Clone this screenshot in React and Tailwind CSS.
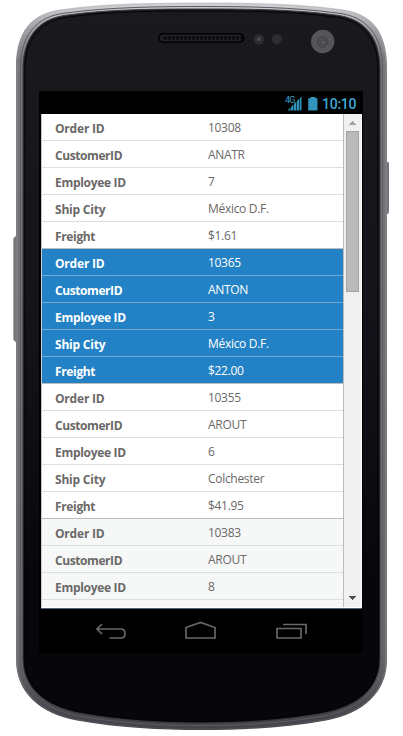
const groups = [
  { rows: ["10308", "ANATR", "7", "México D.F.", "$1.61"], kind: "plain" },
  { rows: ["10365", "ANTON", "3", "México D.F.", "$22.00"], kind: "selected" },
  { rows: ["10355", "AROUT", "6", "Colchester", "$41.95"], kind: "plain" },
  { rows: ["10383", "AROUT", "8", ""], kind: "alt" },
];
const labels = [
  { text: "Order ID", cls: "tracking-[-0.2px]" },
  { text: "CustomerID", cls: "tracking-[-0.42px]" },
  { text: "Employee ID", cls: "tracking-[-0.3px]" },
  { text: "Ship City", cls: "tracking-[-0.2px]" },
  { text: "Freight", cls: "tracking-[-0.35px]" },
];
const styles = {
  plain: "bg-white text-[#6b6868] border-[#dedede]",
  selected: "bg-[#2382c5] text-white border-[#75a8cd]",
  alt: "bg-[#f5f8f7] text-[#6b6868] border-[#dcdedf]",
};

function PhoneBody() {
  const grille = Array.from({ length: 20 }, (_, i) => 164.5 + i * 4);
  return (
    <svg className="absolute inset-0" width="403" height="736" viewBox="0 0 403 736" fill="none">
      <defs>
        <linearGradient id="rim" x1="0" y1="0" x2="0" y2="1">
          <stop offset="0" stopColor="#d4d4d8" />
          <stop offset=".035" stopColor="#a2a2a6" />
          <stop offset=".08" stopColor="#77777b" />
          <stop offset=".9" stopColor="#68686d" />
          <stop offset=".96" stopColor="#4b4a50" />
          <stop offset="1" stopColor="#454349" />
        </linearGradient>
        <linearGradient id="edge" x1="0" y1="0" x2="0" y2="1">
          <stop offset="0" stopColor="#aaa9ae" />
          <stop offset=".9" stopColor="#aaa9ae" />
          <stop offset="1" stopColor="#605f65" />
        </linearGradient>
        <linearGradient id="glass" x1="0" y1="0" x2="0" y2="1">
          <stop offset="0" stopColor="#1a191e" />
          <stop offset=".45" stopColor="#141319" />
          <stop offset=".8" stopColor="#07060b" />
          <stop offset="1" stopColor="#07060b" />
        </linearGradient>
      </defs>
      <path d="M16 236q-3 1-3 7v92q0 6 3 7z" fill="#77777b" />
      <path d="M13.5 238v102" stroke="#aaaaae" />
      <path d="M386 162h2q1 0 1 2v47q0 2-1 3h-2z" fill="#77747b" />
      <path d="M16 67C16 32 31 12 64 9C105 3 155 2.500 201.500 2.500S298 3 339 9C372 12 387 32 387 67V660C387 692 363 714 326 720.500C284 728 242 730 201.500 730S119 728 77 720.500C40 714 16 692 16 660Z" fill="url(#rim)" />
      <path d="M17 67C17 33 32 13 64 10C105 4 155 3.500 201.500 3.500S298 4 339 10C371 13 386 33 386 67V660C386 691 362 713 326 719.500C284 727 242 729 201.500 729S119 727 77 719.500C41 713 17 691 17 660Z" stroke="url(#edge)" strokeOpacity=".4" />
      <path d="M20.500 68C20.500 36 36 16 66 13C110 7 160 6.500 201.500 6.500S293 7 337 13C367 16 382.500 36 382.500 68V660C382.500 689 360 709.500 324 716C282 723.500 242 725.500 201.500 725.500S121 723.500 79 716C43 709.500 20.500 689 20.500 660Z" stroke="#5b5a61" strokeWidth="1" />
      <path d="M23 69C23 38 38 18 68 15C110 9 160 9 201.500 9S293 9 335 15C365 18 380 38 380 69V659C380 688 358 707 322 713.500C282 720.500 242 723 201.500 723S121 720.500 81 713.500C45 707 23 688 23 659Z" fill="url(#glass)" stroke="#3c3a41" />
      <path d="M25 69C25 40 40 20 69 17C111 11 160 11 201.500 11S292 11 334 17C363 20 378 40 378 69V659C378 686 357 705 321 711.500C281 718.500 242 721 201.500 721S122 718.500 82 711.500C46 705 25 686 25 659Z" stroke="#050508" strokeWidth="1" />
      <rect x="158" y="33" width="86.500" height="10" rx="5" fill="#020203" />
      <rect x="160" y="35" width="82" height="6" rx="3" fill="#1d1c21" stroke="#2c2b30" strokeWidth=".6" />
      {grille.map((x) => (
        <rect key={x} x={x} y="36.500" width="2" height="3" fill="#050507" />
      ))}
      <circle cx="259" cy="39.300" r="5.300" fill="#2b2b30" />
      <circle cx="259" cy="39.300" r="2" fill="#4c4c52" />
      <circle cx="277" cy="39.300" r="5.300" fill="#2b2b30" />
      <circle cx="277" cy="39.300" r="2.500" stroke="#36363c" />
      <circle cx="322.700" cy="41.500" r="11.700" fill="#555458" />
      <circle cx="322.700" cy="42" r="5.200" fill="#504f54" stroke="#3e3d42" strokeWidth="1" />
      <circle cx="323" cy="42.500" r="2.500" fill="#5a595e" stroke="#3e3d42" strokeWidth=".8" />
    </svg>
  );
}

function StatusBar() {
  return (
    <div className="relative h-[23px] shrink-0">
      <svg className="absolute left-[244px] top-0" width="36" height="23" viewBox="0 0 36 23">
        <g fill="#3094bd">
          <path d="M4.500 19.500l3-3v3zM8 16l2.400-2.400v5.900H8zM11 13l2.400-2.400v8.900H11zM14 10l2.200-2.200v11.700H14zM16.800 7.200l1.700-1.700v14h-1.700z" />
          <path d="M27.500 6h5v1.200h2V19.500h-9.300V7.200h2.300z" />
        </g>
      </svg>
      <span className="absolute left-[246px] top-[5px] text-[9px] leading-[8px] tracking-[-0.8px] text-[#3a9fc9] font-[Roboto,sans-serif]">4G</span>
      <span className="absolute left-[283px] top-[5px] text-[14px] leading-[16px] tracking-[-0.25px] text-[#3ba9d8] font-medium font-[Roboto,sans-serif]">10:10</span>
    </div>
  );
}

function Scrollbar() {
  return (
    <div className="flex w-[18px] shrink-0 flex-col items-center bg-[#f0f0f0] border-r border-white">
      <svg width="17" height="17" viewBox="0 0 17 17" shapeRendering="crispEdges">
        <path d="M4.500 11h8l-4-4.500z" fill="#a0a0a0" />
      </svg>
      <div className="h-[161px] w-[13px] border border-[#a4a4a4] bg-[#bababa]" />
      <svg className="mt-auto" width="17" height="17" viewBox="0 0 17 17" shapeRendering="crispEdges">
        <path d="M4.500 6h8l-4 4.500z" fill="#4d4d4d" />
      </svg>
    </div>
  );
}

function Grid() {
  return (
    <div className="flex h-[494px] shrink-0 overflow-hidden border-l border-b border-l-[#c9c9c9] border-b-white ml-[2px] mr-px">
      <div className="min-w-0 flex-1 border-r border-[#bcbcbc]">
        {groups.map((g, gi) => (
          <div key={gi} className={g.kind === "alt" ? "h-[88px] overflow-hidden bg-[#f5f8f7]" : ""}>
            {g.rows.map((value, i) => (
              <div
                key={i}
                className={`flex h-[27px] border-b pl-[13px] text-[12px] leading-[16px] font-['Open_Sans','Noto_Sans',sans-serif] ${styles[g.kind]} ${i === 4 ? "border-b-[#bcbcbc]" : ""}`}
              >
                <div className={`w-[153px] shrink-0 pt-[7px] font-bold ${labels[i].cls}`}>{gi === 3 && i === 3 ? "" : labels[i].text}</div>
                <div className="pt-[6px] tracking-[-0.3px]">{value}</div>
              </div>
            ))}
          </div>
        ))}
      </div>
      <Scrollbar />
    </div>
  );
}

function NavBar() {
  return (
    <svg className="h-[44px] w-full shrink-0" viewBox="39 609 324 44" fill="none" stroke="#68686b" strokeWidth="1.700">
      <path d="M102 624l-5 5 5 5M97.500 629H121q4 0 4 4.500t-4 4.500H109.500" />
      <path d="M186 638V627.500L200.500 622.500L215 627.500V638Z" />
      <path d="M277 628.500h24v9.500h-24zM283 624.500h23V634" />
    </svg>
  );
}

export default function App() {
  return (
    <div className="relative h-[736px] w-[403px] overflow-hidden bg-white">
      <PhoneBody />
      <div className="relative pl-[39px] pt-[91px]">
        <div className="flex h-[562px] w-[324px] flex-col rounded-[2px] bg-black">
          <StatusBar />
          <Grid />
          <div className="ml-[2px] mr-px h-px shrink-0 bg-[#53617e]" />
          <NavBar />
        </div>
      </div>
    </div>
  );
}
